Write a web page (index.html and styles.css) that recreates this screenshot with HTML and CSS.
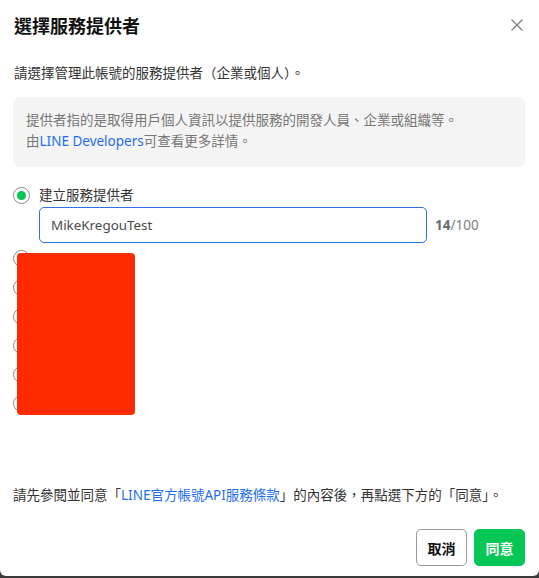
FILE: index.html
```html
<!DOCTYPE html>
<html lang="zh-Hant">
<head>
<meta charset="utf-8">
<title>選擇服務提供者</title>
<link rel="stylesheet" href="styles.css">
</head>
<body>
<div class="modal">
  <div class="header">
    <h1 class="title">選擇服務提供者</h1>
    <button class="close" aria-label="關閉">
      <svg width="12" height="12" viewBox="0 0 12 12"><path d="M0.5 0.5 L11.5 11.5 M11.5 0.5 L0.5 11.5" stroke="#808080" stroke-width="1.3" fill="none"/></svg>
    </button>
  </div>
  <div class="content">
    <p class="lead">請選擇管理此帳號的服務提供者（企業或個人）。</p>
    <div class="info">
      <p>提供者指的是取得用戶個人資訊以提供服務的開發人員、企業或組織等。</p>
      <p>由<a href="#" class="link">LINE Developers</a>可查看更多詳情。</p>
    </div>
    <div class="radio-row first">
      <span class="radio checked"></span>
      <span class="radio-label">建立服務提供者</span>
    </div>
    <div class="input-row">
      <div class="input">MikeKregouTest</div>
      <span class="counter"><b>14</b>/100</span>
    </div>
    <div class="options">
      <div class="radio-row"><span class="radio"></span></div>
      <div class="radio-row"><span class="radio"></span></div>
      <div class="radio-row"><span class="radio"></span></div>
      <div class="radio-row"><span class="radio"></span></div>
      <div class="radio-row"><span class="radio"></span></div>
      <div class="radio-row"><span class="radio"></span></div>
      <div class="redact"></div>
    </div>
  </div>
  <p class="notice">請先參閱並同意「<a href="#" class="link">LINE官方帳號API服務條款</a>」的內容後，再點選下方的「同意」。</p>
  <div class="footer">
    <button class="btn btn-cancel">取消</button>
    <button class="btn btn-ok">同意</button>
  </div>
</div>
</body>
</html>
```
FILE: styles.css
```css
* { box-sizing: border-box; }
html, body { margin: 0; padding: 0; }
body {
  background: #3a3a3a;
  font-family: "Noto Sans", "Noto Sans CJK TC", sans-serif;
  color: #333;
  height: 578px;
  overflow: hidden;
}
p { margin: 0; }
.modal {
  width: 539px;
  height: 576px;
  background: #fff;
  border-radius: 0 0 6px 6px;
  display: flex;
  flex-direction: column;
}
.header {
  display: flex;
  justify-content: space-between;
  align-items: center;
  padding: 14px 16px 0 14px;
  height: 38px;
}
.title {
  margin: 0;
  font-size: 18px;
  line-height: 24px;
  font-weight: 700;
  color: #111;
}
.close {
  border: 0;
  background: none;
  padding: 0;
  width: 12px;
  height: 12px;
  display: flex;
  margin-top: -3px;
}
.content {
  flex: 1;
  padding: 0 14px 0 13px;
}
.lead {
  font-size: 13.5px;
  line-height: 20px;
  margin-top: 25px;
  padding-left: 1px;
  color: #333;
}
.info {
  margin-top: 14px;
  background: #f4f4f4;
  border-radius: 7px;
  padding: 13px 12px 15px 13px;
  font-size: 13.5px;
  line-height: 21px;
  color: #777;
}
.link { color: #1f6ef0; text-decoration: none; }
.radio-row {
  display: flex;
  align-items: center;
  height: 29px;
}
.radio-row.first {
  margin-top: 18px;
  height: 20px;
}
.radio {
  width: 17px;
  height: 17px;
  border: 1px solid #8c8c8c;
  border-radius: 50%;
  display: flex;
  align-items: center;
  justify-content: center;
  flex: none;
}
.radio.checked::after {
  content: "";
  width: 9px;
  height: 9px;
  border-radius: 50%;
  background: #06c755;
}
.radio-label {
  margin-left: 9px;
  font-size: 13.5px;
  line-height: 20px;
  color: #333;
}
.input-row {
  display: flex;
  align-items: center;
  margin-top: 2px;
  padding-left: 26px;
}
.input {
  width: 388px;
  height: 36px;
  border: 1px solid #2f72e6;
  border-radius: 5px;
  padding: 0 11px;
  display: flex;
  align-items: center;
  font-size: 13.4px;
  color: #4a4a4a;
}
.counter {
  margin-left: 8px;
  font-size: 13.5px;
  color: #808080;
}
.counter b { font-weight: 700; color: #6a6a6a; }
.options {
  position: relative;
  margin-top: 1px;
}
.redact {
  position: absolute;
  left: 4px;
  top: 9px;
  width: 118px;
  height: 162px;
  background: #ff2b00;
  border-radius: 4px;
}
.notice {
  font-size: 13.5px;
  line-height: 20px;
  padding: 0 14px 0 13px;
  margin-bottom: 24px;
  color: #333;
}
.footer {
  display: flex;
  justify-content: flex-end;
  gap: 7px;
  padding: 0 14px 10px;
}
.btn {
  width: 51px;
  height: 37px;
  border-radius: 5px;
  font-family: "Noto Sans", "Noto Sans CJK TC", sans-serif;
  font-size: 14px;
  font-weight: 700;
  padding: 0;
}
.btn-cancel {
  background: #fff;
  border: 1px solid #999;
  color: #111;
}
.btn-ok {
  background: #06c755;
  border: 1px solid #06c755;
  color: #fff;
}
```
